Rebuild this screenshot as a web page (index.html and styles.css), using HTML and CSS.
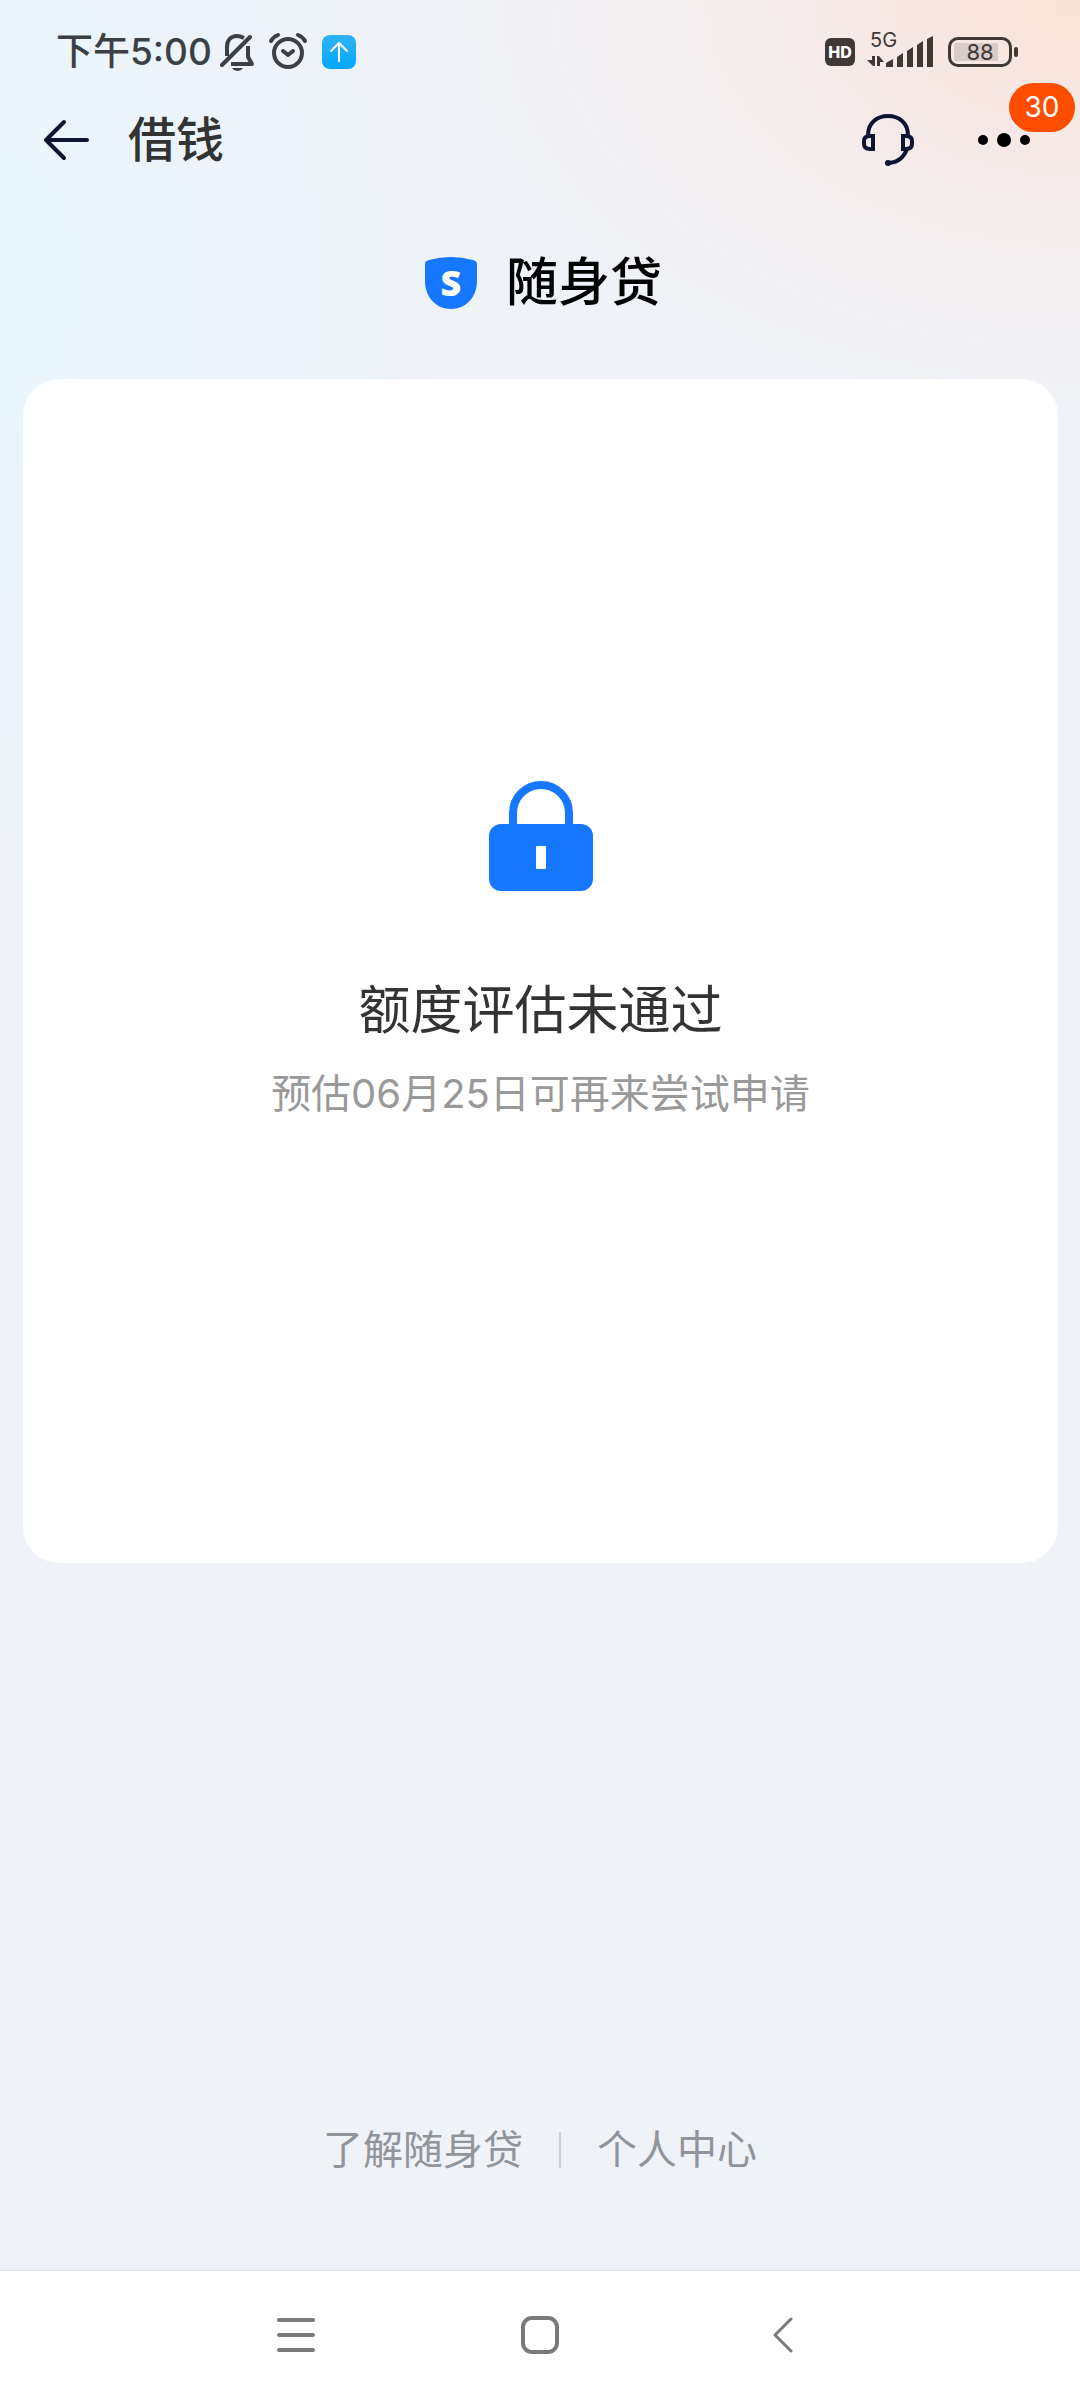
FILE: index.html
```html
<!DOCTYPE html>
<html lang="zh-CN">
<head>
    <meta charset="UTF-8">
    <meta name="viewport" content="width=device-width, initial-scale=1.0">
    <title>借钱</title>
    <link rel="stylesheet" href="styles.css">
</head>
<body>
    <!-- 状态栏 -->
    <div class="status-bar">
        <div class="status-left">
            <span class="time">下午5:00</span>
            <svg class="icon-bell" width="36" height="40" viewBox="0 0 36 40" fill="none" stroke="#3c3f45" stroke-width="4">
                <path d="M7 24V15C7 8 11 4 17 4C20 4 22 5 24 6"/>
                <path d="M2 33L30 5" stroke-linecap="round"/>
                <path d="M11 32H32L28 25V14" stroke-linejoin="round"/>
                <path d="M12 36H23Q21 39 17 39Q14 39 12 36Z" fill="#3c3f45" stroke="none"/>
            </svg>
            <svg class="icon-alarm" width="40" height="40" viewBox="0 0 40 40" fill="none" stroke="#3c3f45" stroke-width="4">
                <circle cx="20" cy="21" r="14"/>
                <path d="M15 19L20 23L25 19M3 9Q5 5 10 3M37 9Q35 5 30 3" stroke-linecap="round" stroke-linejoin="round"/>
            </svg>
            <span class="upload">
                <svg width="34" height="34" viewBox="0 0 34 34" fill="none" stroke="#fff" stroke-width="2" stroke-linecap="round">
                    <path d="M17 26V9M9 16L17 8L25 16"/>
                </svg>
            </span>
        </div>
        <div class="status-right">
            <span class="hd">HD</span>
            <span class="signal">
                <span class="network">5G</span>
                <svg width="68" height="32" viewBox="0 0 68 32" fill="#403835">
                    <path d="M5 20H8V30H6L0 24H5ZM10 20H12L17 26H13V30H10Z"/>
                    <path d="M19 27L26 23V31H19ZM30 21L36 17V31H30ZM40 15L46 11V31H40ZM50 9L56 5V31H50ZM60 3L66 0V31H60Z"/>
                </svg>
            </span>
            <span class="battery"><span class="battery-level">88</span></span>
        </div>
    </div>

    <!-- 标题栏 -->
    <header class="header">
        <button class="icon-btn back" type="button" aria-label="返回">
            <svg width="48" height="44" viewBox="0 0 48 44" fill="none" stroke="#0d1530" stroke-width="4" stroke-linecap="round" stroke-linejoin="round">
                <path d="M22 4L4 22L22 40M4 22H45"/>
            </svg>
        </button>
        <h1>借钱</h1>
        <button class="icon-btn service" type="button" aria-label="客服">
            <svg width="52" height="52" viewBox="0 0 52 52" fill="none" stroke="#0d1530" stroke-width="4">
                <path d="M6 21C6 9 15 2 26 2S46 9 46 21"/>
                <path d="M11 22V35H8Q2 35 2 30V27Q2 22 8 22ZM41 22V35H44Q50 35 50 30V27Q50 22 44 22Z"/>
                <path d="M45 35C42 43 36 49 25 49"/>
                <circle cx="26" cy="49" r="3" fill="#0d1530" stroke="none"/>
            </svg>
        </button>
        <button class="icon-btn more" type="button" aria-label="更多">
            <svg width="52" height="16" viewBox="0 0 52 16">
                <circle cx="5" cy="8" r="5"/>
                <circle cx="26" cy="8" r="7"/>
                <circle cx="47" cy="8" r="5"/>
            </svg>
            <span class="badge">30</span>
        </button>
    </header>

    <div class="brand">
        <svg width="54" height="52" viewBox="0 0 54 52">
            <path d="M1 7Q1 4 5 3Q27 -3 49 3Q53 4 53 7V24C53 40 42 52 27 52S1 40 1 24Z" fill="#1677ff"/>
            <text class="brand-letter" x="27" y="39" text-anchor="middle">S</text>
        </svg>
        <h2>随身贷</h2>
    </div>

    <main class="card">
        <svg class="lock" width="106" height="110" viewBox="0 0 106 110">
            <path d="M25 46V32A28 28 0 0 1 81 32V46" fill="none" stroke="#1677ff" stroke-width="8"/>
            <rect x="1" y="43" width="104" height="67" rx="12" fill="#1677ff"/>
            <rect x="48" y="65" width="10" height="23" rx="1" fill="#fff"/>
        </svg>
        <p class="result">额度评估未通过</p>
        <p class="hint">预估06月25日可再来尝试申请</p>
    </main>

    <footer class="links">
        <a href="#about">了解随身贷</a>
        <span class="divider"></span>
        <a href="#profile">个人中心</a>
    </footer>

    <!-- 系统导航 -->
    <nav class="nav-bar">
        <button class="icon-btn" type="button" aria-label="菜单">
            <svg width="44" height="44" viewBox="0 0 44 44" fill="none" stroke="#7a7a7a" stroke-width="4" stroke-linecap="round">
                <path d="M5 7H39M5 22H39M5 37H39"/>
            </svg>
        </button>
        <button class="icon-btn" type="button" aria-label="主页">
            <svg width="44" height="44" viewBox="0 0 44 44" fill="none" stroke="#7a7a7a" stroke-width="4">
                <rect x="5" y="5" width="34" height="34" rx="9"/>
            </svg>
        </button>
        <button class="icon-btn" type="button" aria-label="后退">
            <svg width="44" height="44" viewBox="0 0 44 44" fill="none" stroke="#7a7a7a" stroke-width="3" stroke-linecap="round" stroke-linejoin="round">
                <path d="M29 6L13 22L29 38"/>
            </svg>
        </button>
    </nav>
</body>
</html>
```

FILE: styles.css
```css
* {
    box-sizing: border-box;
}

body {
    font-family: Inter, 'Noto Sans CJK SC', sans-serif;
    margin: 0;
    min-height: 100vh;
    display: flex;
    flex-direction: column;
    color: #333;
    background-color: #eff2f7;
    background-image:
        radial-gradient(ellipse 640px 420px at 100% 0, #fae2d8 0%, rgba(247, 234, 232, 0.7) 50%, rgba(243, 240, 243, 0) 100%),
        radial-gradient(ellipse 480px 700px at 0 280px, #e8f6fe 0%, rgba(235, 244, 253, 0.7) 45%, rgba(239, 242, 247, 0) 100%);
}

h1, h2, p {
    margin: 0;
}

svg {
    display: block;
    flex: none;
}

.icon-btn {
    position: relative;
    padding: 0;
    border: none;
    background: none;
    cursor: pointer;
}

.status-bar {
    display: flex;
    justify-content: space-between;
    align-items: center;
    height: 104px;
    padding: 0 68px 0 56px;
}

.status-left,
.status-right {
    display: flex;
    align-items: center;
}

.time {
    font-size: 37px;
    font-weight: 500;
    line-height: 40px;
    color: #3c3f45;
}

.icon-bell {
    margin-left: 8px;
}

.icon-alarm {
    margin-left: 12px;
}

.upload {
    margin-left: 14px;
    border-radius: 8px;
    background: linear-gradient(to bottom, #2db4f5, #06a6ff);
}

.hd {
    width: 30px;
    height: 28px;
    border-radius: 6px;
    background-color: #403835;
    color: #fff;
    font-size: 16px;
    font-weight: 800;
    line-height: 28px;
    text-align: center;
}

.signal {
    position: relative;
    margin-left: 12px;
}

.network {
    position: absolute;
    left: 3px;
    top: -8px;
    font-size: 20px;
    line-height: 24px;
    color: #403835;
}

.battery {
    position: relative;
    width: 64px;
    height: 30px;
    margin-left: 13px;
    padding: 3px;
    border: 3px solid #403835;
    border-radius: 10px;
}

.battery::after {
    content: "";
    position: absolute;
    right: -9px;
    top: 7px;
    width: 4px;
    height: 10px;
    border-radius: 2px;
    background-color: #403835;
}

.battery-level {
    display: block;
    border-radius: 2px;
    background: linear-gradient(to right, #d9cbc8 84%, transparent 84%);
    color: #403835;
    font-size: 22px;
    line-height: 18px;
    text-align: center;
}

.header {
    display: flex;
    align-items: center;
    height: 72px;
    padding: 0 50px 0 42px;
}

.header h1 {
    flex: 1;
    margin-left: 38px;
    font-size: 48px;
    font-weight: 500;
    line-height: 60px;
}

.more {
    margin-left: 64px;
}

.badge {
    position: absolute;
    left: 31px;
    bottom: 16px;
    width: 66px;
    height: 49px;
    border-radius: 25px;
    background-color: #ff4d00;
    color: #fff;
    font-family: Inter, sans-serif;
    font-size: 28px;
    line-height: 49px;
    text-align: center;
}

.brand {
    display: flex;
    justify-content: center;
    align-items: center;
    gap: 28px;
    padding: 75px 0 64px 6px;
}

.brand-letter {
    font-family: 'Open Sans', sans-serif;
    font-size: 36px;
    font-weight: 800;
    fill: #fff;
}

.brand h2 {
    font-size: 52px;
    font-weight: 500;
    line-height: 64px;
    color: #000;
}

.card {
    display: flex;
    flex-direction: column;
    align-items: center;
    margin: 0 22px 0 23px;
    padding: 402px 20px 441px;
    border-radius: 36px;
    background-color: #fff;
}

.result {
    margin-top: 84px;
    font-size: 52px;
    line-height: 72px;
}

.hint {
    margin-top: 19px;
    font-size: 40px;
    line-height: 56px;
    color: #999;
}

.links {
    display: flex;
    justify-content: center;
    align-items: center;
    gap: 36px;
    margin-top: auto;
    padding: 40px 0 92px;
}

.links a {
    font-size: 40px;
    line-height: 56px;
    color: #919499;
    text-decoration: none;
}

.divider {
    width: 2px;
    height: 36px;
    background-color: #c9ccd1;
}

.nav-bar {
    display: flex;
    justify-content: center;
    gap: 200px;
    padding: 42px 0 43px;
    border-top: 1px solid #e1e4e9;
    background-color: #fff;
}
```
